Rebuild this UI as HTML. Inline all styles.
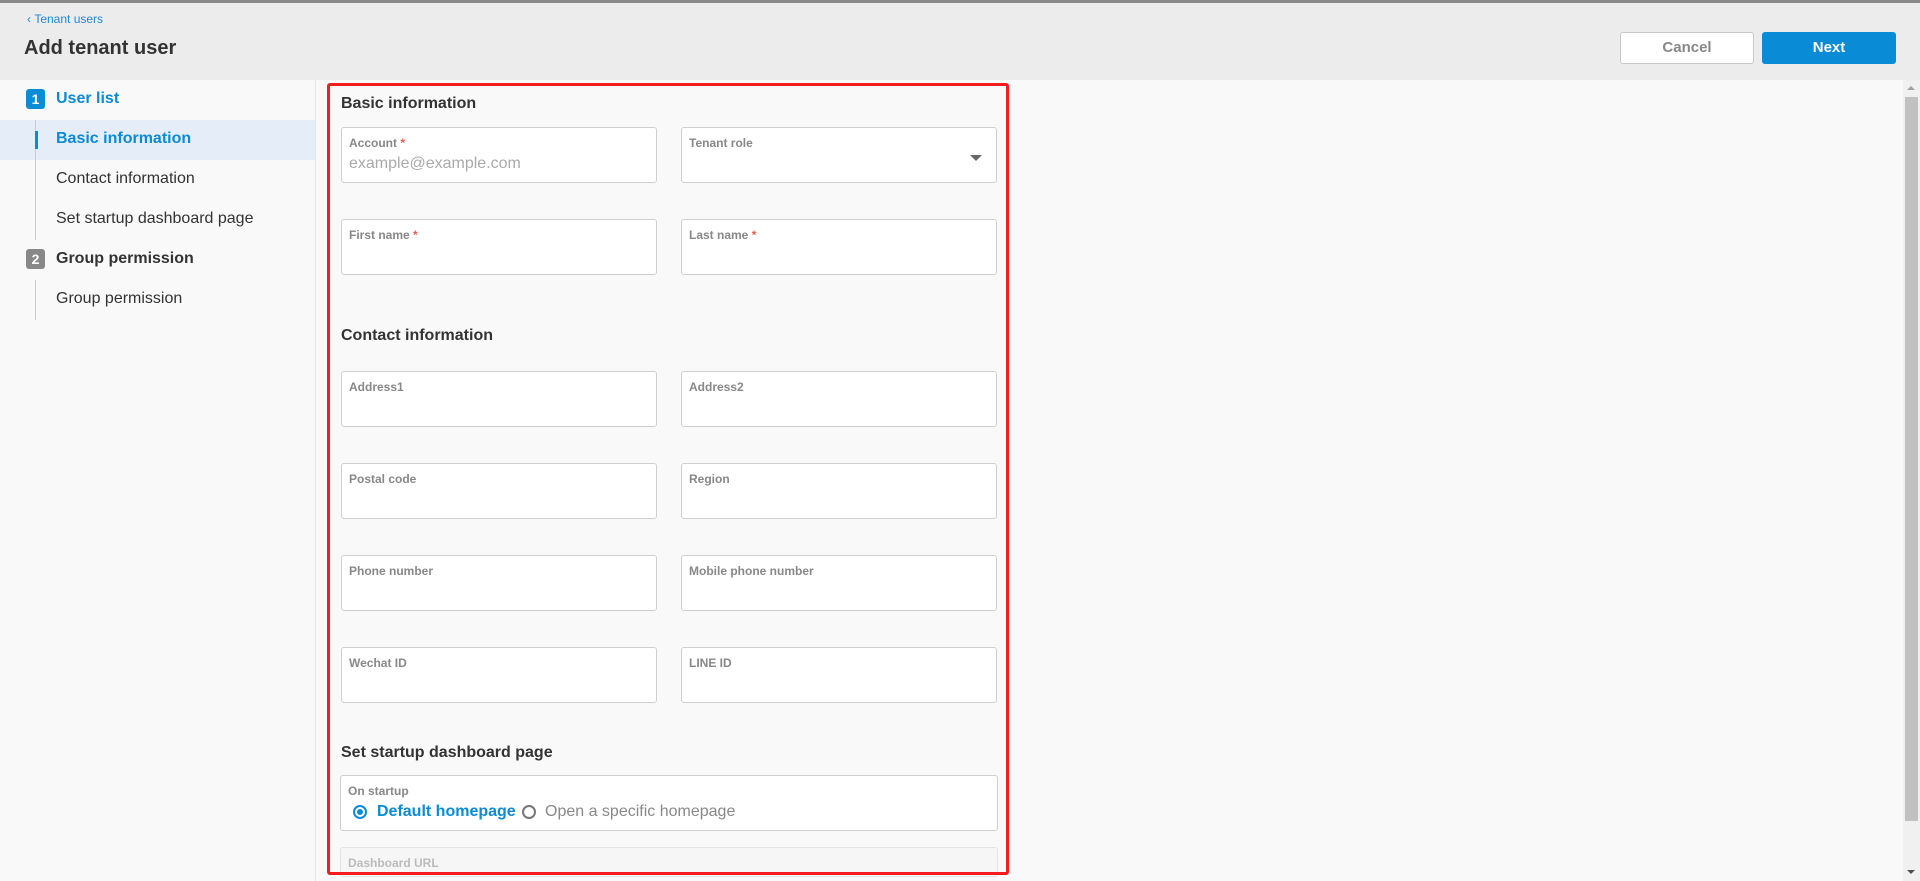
<!DOCTYPE html>
<html style="overflow:hidden"><head><meta charset="utf-8"><style>
*{box-sizing:border-box;margin:0;padding:0}
body{width:1920px;height:881px;overflow:hidden;background:#f9f9f9;font-family:"Liberation Sans",sans-serif;position:relative}
.hdr{position:absolute;left:0;top:0;width:1920px;height:80px;background:#ececec;border-top:3px solid #8a8a8a}
.abs{position:absolute}
.side{position:absolute;left:0;top:80px;width:316px;height:801px;background:#f9f9f9;border-right:1px solid #e6e6e6}
.badge{position:absolute;left:26px;width:19px;height:20px;border-radius:3px;color:#fff;font-size:14px;font-weight:bold;text-align:center;line-height:20px}
.nav{position:absolute;left:56px;font-size:16px;color:#333;white-space:nowrap}
.fld{position:absolute;background:#fff;border:1px solid #cfcfcf;border-radius:3px;height:56px;width:316px}
.fld .l{position:absolute;left:7px;top:8px;font-size:12px;font-weight:bold;color:#888}
.fld .l i{color:#f05a4a;font-style:normal}
.h{position:absolute;left:341px;font-size:16px;font-weight:bold;color:#333}
</style></head><body>
<div class="hdr"></div>
<div class="abs" style="left:27px;top:12px;font-size:12px;color:#1a8ad4">&#8249;&nbsp;Tenant users</div>
<div class="abs" style="left:24px;top:37px;font-size:20px;font-weight:bold;color:#333">Add tenant user</div>
<div class="abs" style="left:1620px;top:32px;width:134px;height:32px;background:#fff;border:1px solid #c8c8c8;border-radius:3px;text-align:center;line-height:30px;font-size:15px;font-weight:bold;color:#888">Cancel</div>
<div class="abs" style="left:1762px;top:32px;width:134px;height:32px;background:#0a8bd6;border-radius:3px;text-align:center;line-height:32px;font-size:15px;font-weight:bold;color:#fff">Next</div>

<div class="side">
<div class="abs" style="left:0;top:40px;width:315px;height:40px;background:#e4edf8"></div>
<div class="abs" style="left:35px;top:40px;width:1px;height:120px;background:#ccc"></div>
<div class="abs" style="left:35px;top:200px;width:1px;height:40px;background:#ccc"></div>
<div class="abs" style="left:35px;top:51px;width:3px;height:18px;background:#0a8bd6"></div>
<div class="badge" style="top:9px;background:#0a8bd6">1</div>
<div class="nav" style="top:10px;font-weight:bold;color:#0a8bd6">User list</div>
<div class="nav" style="top:50px;font-weight:bold;color:#0a8bd6">Basic information</div>
<div class="nav" style="top:90px">Contact information</div>
<div class="nav" style="top:130px">Set startup dashboard page</div>
<div class="badge" style="top:169px;background:#888">2</div>
<div class="nav" style="top:170px;font-weight:bold">Group permission</div>
<div class="nav" style="top:210px">Group permission</div>
</div>

<div class="h" style="top:95px">Basic information</div>
<div class="fld" style="left:341px;top:127px"><div class="l">Account <i>*</i></div><div style="position:absolute;left:7px;top:27px;font-size:16px;color:#aaa">example@example.com</div></div>
<div class="fld" style="left:681px;top:127px"><div class="l">Tenant role</div><div style="position:absolute;right:14px;top:27px;width:0;height:0;border-left:6px solid transparent;border-right:6px solid transparent;border-top:6px solid #666"></div></div>
<div class="fld" style="left:341px;top:219px"><div class="l">First name <i>*</i></div></div>
<div class="fld" style="left:681px;top:219px"><div class="l">Last name <i>*</i></div></div>
<div class="h" style="top:327px">Contact information</div>
<div class="fld" style="left:341px;top:371px"><div class="l">Address1</div></div>
<div class="fld" style="left:681px;top:371px"><div class="l">Address2</div></div>
<div class="fld" style="left:341px;top:463px"><div class="l">Postal code</div></div>
<div class="fld" style="left:681px;top:463px"><div class="l">Region</div></div>
<div class="fld" style="left:341px;top:555px"><div class="l">Phone number</div></div>
<div class="fld" style="left:681px;top:555px"><div class="l">Mobile phone number</div></div>
<div class="fld" style="left:341px;top:647px"><div class="l">Wechat ID</div></div>
<div class="fld" style="left:681px;top:647px"><div class="l">LINE ID</div></div>
<div class="h" style="top:744px">Set startup dashboard page</div>
<div class="fld" style="left:340px;top:775px;width:658px"><div class="l">On startup</div>
<div style="position:absolute;left:12px;top:29px;width:14px;height:14px;border:2px solid #0a8bd6;border-radius:50%"><div style="position:absolute;left:2px;top:2px;width:6px;height:6px;border-radius:50%;background:#0a8bd6"></div></div>
<div style="position:absolute;left:36px;top:27px;font-size:16px;font-weight:bold;color:#0a8bd6">Default homepage</div>
<div style="position:absolute;left:181px;top:29px;width:14px;height:14px;border:2px solid #777;border-radius:50%"></div>
<div style="position:absolute;left:204px;top:27px;font-size:16px;color:#888">Open a specific homepage</div>
</div>
<div class="fld" style="left:340px;top:847px;width:658px;height:30px;background:#f6f6f6;border-color:#e4e4e4"><div class="l" style="color:#bbb">Dashboard URL</div></div>

<div class="abs" style="left:327px;top:83px;width:682px;height:792px;border:3px solid #f41c1c;border-radius:3px"></div>

<div class="abs" style="left:1903px;top:80px;width:17px;height:801px;background:#f0f0f0"></div>
<div class="abs" style="left:1905px;top:97px;width:13px;height:724px;background:#c1c1c1"></div>
<div class="abs" style="left:1907px;top:86px;width:0;height:0;border-left:4px solid transparent;border-right:4px solid transparent;border-bottom:4px solid #a0a0a0"></div>
<div class="abs" style="left:1907px;top:870px;width:0;height:0;border-left:4px solid transparent;border-right:4px solid transparent;border-top:4px solid #505050"></div>
</body></html>
